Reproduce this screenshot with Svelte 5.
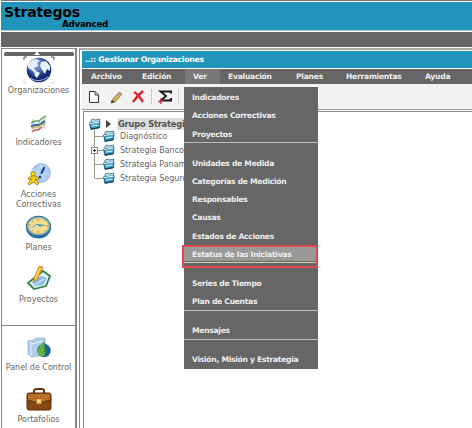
<script>
  const menus = [
    { t: 'Archivo', w: 51 }, { t: 'Edición', w: 51 }, { t: 'Ver', w: 35, on: true },
    { t: 'Evaluación', w: 68 }, { t: 'Planes', w: 50 }, { t: 'Herramientas', w: 79 }, { t: 'Ayuda', w: 40 }
  ];
  const groups = [
    ['Indicadores', 'Acciones Correctivas', 'Proyectos'],
    ['Unidades de Medida', 'Categorías de Medición', 'Responsables', 'Causas', 'Estados de Acciones', 'Estatus de las Iniciativas'],
    ['Series de Tiempo', 'Plan de Cuentas'],
    ['Mensajes'],
    ['Visión, Misión y Estrategia']
  ];
  const tree = ['Diagnóstico', 'Strategia Banco', 'Strategia Panamá', 'Strategia Seguros'];
</script>

{#snippet label(lines)}
  <div class="label">{#each lines as l}<div>{l}</div>{/each}</div>
{/snippet}

{#snippet folder()}
  <svg class="folder" width="12" height="12" viewBox="0 0 12 12">
    <path d="M2 2 5 1 6 2 11 1 10 4 10 10 2 11Z" fill="#b8dced" stroke="#35718d" stroke-width=".8" />
    <path d="M.5 5 9 4 11 3.5 10.5 9.5 2 11.5Z" fill="#3d9dca" stroke="#184d6b" stroke-width=".8" />
    <path d="M1 5.5 10.5 4.2M3 8 9.5 7" stroke="#d8f4fc" stroke-width="1.2" />
    <path d="M2 11 10.5 9.5" stroke="#173848" />
  </svg>
{/snippet}

<div class="app">
  <header>
    <div class="name">Strategos</div>
    <div class="edition">Advanced</div>
  </header>
  <div class="band"></div>
  <div class="body">
    <aside>
      <div class="scroll"><svg width="70" height="5" viewBox="0 0 70 5"><rect y="1" width="70" height="4" rx="1.5" fill="#666" /><path d="M30 4 33 .5 36 4Z" fill="#fff" /></svg></div>
      <div class="item first">
        <svg width="32" height="28" viewBox="0 0 32 28">
          <defs><radialGradient id="globe" cx=".4" cy=".3"><stop offset="0" stop-color="#8ea9df" /><stop offset=".6" stop-color="#4264b3" /><stop offset="1" stop-color="#172c74" /></radialGradient></defs>
          <path d="M1 4V1H4M28 1H31V4" fill="none" stroke="#444" />
          <path d="M1 24V27H4M28 27H31V24" fill="none" stroke="#ddd" />
          <circle cx="16" cy="14" r="12.3" fill="url(#globe)" />
          <path d="M5 8Q9 3 14 3L17 5 14 7 15 10 11 12 13 15 17 17 14 22 12 20 11 16 7 13 5 12ZM18 6 23 5 27 10 27 15 24 13 22 18 19 14 17 10Z" fill="#e7f0fc" />
          <path d="M7 22Q16 28 25 21" fill="none" stroke="#9eb6e8" />
        </svg>
        {@render label(['Organizaciones'])}
      </div>
      <div class="item">
        <svg width="18" height="19" viewBox="0 0 18 19">
          <path d="M2 7 9 4 12 2 16 1V14L3 17Z" fill="#eaf4ef" />
          <path d="M1 8 5 6 9 6 12 3 16 1" fill="none" stroke="#69ad57" stroke-width="1.5" />
          <path d="M1 11 6 10 9 10 15 6" fill="none" stroke="#265fae" stroke-width="2" />
          <path d="M1 13 7 12 12 10 15 8" fill="none" stroke="#e7b448" stroke-width="1.4" />
          <path d="M2 17 5 15 8 15 12 12" fill="none" stroke="#ce5946" stroke-width="1.5" />
          <path d="M3 4V16M9 5V15M14 3V13" stroke="#4b83b5" stroke-width=".5" />
        </svg>
        {@render label(['Indicadores'])}
      </div>
      <div class="item two">
        <svg width="26" height="24" viewBox="0 0 26 24">
          <circle cx="15" cy="11" r="9.3" fill="#a9cbf2" stroke="#8db4e6" />
          <path d="M15 2 10 17M15 2 18 19M6 8 24 13M7 16 22 5" stroke="#bfd9f8" stroke-width="1.5" />
          <path d="M18 6 15.5 11" stroke="#173a99" stroke-width="2" stroke-linecap="round" /><circle cx="14" cy="15" r="1.2" fill="#173a99" />
          <circle cx="7" cy="12" r="2.4" fill="#f8d519" stroke="#8c7410" stroke-width=".6" />
          <path d="M6 14 2 16 3 18 6 17 2 21 3 23 8 20 11 23 13 21 9 17 12 18 13 16 9 14Z" fill="#f4ce10" stroke="#826b0c" stroke-width=".7" />
        </svg>
        {@render label(['Acciones', 'Correctivas'])}
      </div>
      <div class="item">
        <svg width="27" height="24" viewBox="0 0 27 24">
          <ellipse cx="13.5" cy="12.5" rx="12.5" ry="11" fill="#286fa9" />
          <ellipse cx="13.5" cy="11" rx="12" ry="9.8" fill="#83b6d5" stroke="#2c668e" />
          <ellipse cx="13.5" cy="11" rx="10.2" ry="8" fill="#f2dd91" stroke="#c9ad57" stroke-width=".7" />
          <path d="M5 13 12 9 21 10 14 12Z" fill="#4e98ae" /><path d="M5 13 13 10 14 12Z" fill="#fff2ca" />
          <path d="M13 4V6M13 16V18M4 10H6M21 11H23M7 6 8 7M19 6 20 5M7 16 8 15M19 15 20 16" stroke="#a78b3c" />
        </svg>
        {@render label(['Planes'])}
      </div>
      <div class="item">
        <svg width="26" height="26" viewBox="0 0 26 26">
          <path d="M2 18 17 6 24 11 20 21 8 24Z" fill="#e4f3fb" stroke="#318349" stroke-width="1.8" />
          <path d="M6 17 15 11 21 13 17 20 9 21Z" fill="#87b9e5" /><path d="M7 20 17 14M10 20 19 14" stroke="#c6e4fa" />
          <path d="M13 1 17 2 11 15 8 17 8 13Z" fill="#f4b334" stroke="#b77b25" stroke-width=".7" /><path d="M14 3 9 14" stroke="#ffe276" />
        </svg>
        {@render label(['Proyectos'])}
      </div>
      <div class="rule"></div>
      <div class="item panel">
        <svg width="24" height="22" viewBox="0 0 24 22">
          <path d="M1 4 7 3 9 1 18 1V18L4 20 1 17Z" fill="#afcee7" stroke="#86aac8" stroke-width=".7" /><path d="M4 5V19M5 7 17 4" stroke="#e3f2fc" />
          <circle cx="17" cy="13.5" r="6.7" fill="#1761b5" /><path d="M17 4Q7 14 13 19Q17 21 18 18Z" fill="#66b13c" /><path d="M17 4 18 18Q22 14 17 4" fill="#26833c" />
        </svg>
        {@render label(['Panel de Control'])}
      </div>
      <div class="item">
        <svg width="26" height="23" viewBox="0 0 26 23">
          <path d="M8 6V3Q8 1 11 1H16Q18 1 18 3V6" fill="none" stroke="#643511" stroke-width="2" />
          <rect x="1" y="5" width="24" height="17" rx="2" fill="#8a4716" stroke="#56280b" />
          <path d="M2 6H24V12Q13 17 2 12Z" fill="#b77028" /><path d="M2 12Q13 17 24 12" fill="none" stroke="#5e2b0c" />
          <rect x="10.5" y="11" width="5" height="5" rx="1" fill="#e9bb4b" /><rect x="12" y="12" width="2" height="2" fill="#fff1af" />
        </svg>
        {@render label(['Portafolios'])}
      </div>
    </aside>
    <main>
      <div class="title">..:: Gestionar Organizaciones</div>
      <nav>{#each menus as m}<span class:on={m.on} style:width="{m.w}px">{m.t}</span>{/each}</nav>
      <div class="tools">
        <svg width="98" height="18" viewBox="0 0 98 18">
          <path d="M4.5 3.5H10L13.5 7V14.5H4.5Z" fill="#fff" stroke="#333" /><path d="M10 3.5V7H13.5" fill="none" stroke="#444" />
          <path d="M27 12 34 4 37 6 30 14 26 15Z" fill="#deb057" stroke="#765a39" stroke-width=".7" /><path d="M34 4 37 6 35 8 32 6Z" fill="#b997a0" /><path d="M26 15 27 12 30 14Z" fill="#493929" />
          <path d="M49 4Q53 6 58 14M58 3Q53 7 48 14" fill="none" stroke="#e11c2c" stroke-width="2.4" />
          <path d="M66.5 1V17M93.5 1V17" stroke="#aaa" stroke-dasharray="1 1" />
          <path d="M86 5.5V3.5H75.5L81 8 76 12.5H86V10" fill="none" stroke="#181818" stroke-width="1.9" /><path d="M73 14 79 12M76 10V16" stroke="#c92542" stroke-width="1.3" />
        </svg>
      </div>
      <div class="tree">
        <div class="root">{@render folder()}<i class="arrow"></i><b>Grupo Strategia</b></div>
        <div class="nodes">
          {#each tree as n, i}
            <div class="node" class:last={i === 3}><i class="line"></i>{#if i === 1}<i class="plus"></i>{/if}{@render folder()}<span>{n}</span></div>
          {/each}
        </div>
      </div>
      <div class="menu">
        {#each groups as g, i}
          {#if i}<div class="sep"></div>{/if}
          {#each g as t}<div class="opt" class:hot={t.startsWith('Estatus')}>{t}</div>{/each}
        {/each}
        <div class="frame"></div>
      </div>
    </main>
  </div>
</div>

<style>
  :global(body) { background: #fff; }
  * { box-sizing: border-box; }
  .app { width: 472px; height: 428px; overflow: hidden; display: flex; flex-direction: column; padding-left: 1px; background: #fff; font-family: Verdana, "DejaVu Sans", sans-serif; font-size: 8px; }
  header { height: 31px; border-top: 1px solid #777; background: #2094bb; box-shadow: inset 0 1px #fff, inset 0 -1px #b7cbcf; color: #000; font-weight: bold; padding: 3px 0 0 3px; flex: none; }
  .name { font-size: 14px; line-height: 16px; letter-spacing: -.15px; }
  .edition { font-size: 8.8px; line-height: 8px; margin: 0 0 0 58px; letter-spacing: -.3px; }
  .band { height: 15px; margin-top: 1px; background: #666; flex: none; }
  .body { display: flex; flex: 1; min-height: 0; margin-top: 1px; }
  aside { width: 76px; flex: none; border: solid #888; border-width: 1px 2px 0 1px; background: #fff; display: flex; flex-direction: column; }
  .scroll { height: 7px; padding: 2px 0 0 2px; overflow: hidden; flex: none; }
  .scroll svg { display: block; }
  .item { height: 52.3px; flex: none; display: flex; flex-direction: column; justify-content: flex-end; align-items: center; color: #666; gap: 4px; }
  .item svg { display: block; flex: none; }
  .item.first { height: 40px; gap: 2px; }
  .item.two { height: 62px; }
  .item.two + .item { height: 42.5px; }
  .label { font-size: 8px; line-height: 10px; text-align: center; white-space: nowrap; }
  .rule { height: 1px; background: #888; margin-top: 20px; flex: none; }
  .item.panel { height: 47px; }
  main { position: relative; flex: 1; min-width: 0; margin-left: 2px; border-left: 1px solid #888; border-top: 2px solid #aaa; padding: 1px 0 0 2px; display: flex; flex-direction: column; }
  .title { height: 17px; background: #2094bb; color: #fff; font-weight: bold; line-height: 17px; padding-left: 3px; font-size: 7.8px; letter-spacing: -.31px; flex: none; }
  nav { height: 15px; margin-top: 1px; background: #666; display: flex; padding-left: 1px; color: #eee; font-weight: bold; line-height: 16px; font-size: 7.6px; letter-spacing: -.24px; flex: none; }
  nav span { padding-left: 8px; white-space: nowrap; }
  nav .on { background: #777; }
  .tools { height: 26px; background: #f2f2f2; border-bottom: 1px solid #999; padding: 4px 0 0 3px; flex: none; }
  .tools svg { display: block; }
  .tree { flex: 1; margin-top: 1px; border: solid #888; border-width: 1px 0 0 1px; margin-left: 1px; padding: 4px 0 0 5px; color: #666; }
  .folder { display: block; flex: none; }
  .root { display: flex; align-items: center; height: 15px; }
  .root b { background: #ddd; padding: 0 1px; margin-left: 6px; line-height: 12px; font-size: 8.3px; letter-spacing: -.2px; color: #555; white-space: nowrap; }
  .arrow { border: solid transparent; border-width: 4px 0 4px 5px; border-left-color: #444; margin-left: 5px; }
  .nodes { padding-left: 5px; margin-top: -2px; }
  .node { position: relative; display: flex; align-items: center; height: 14.1px; border-left: 1px solid #998; }
  .node.last { border-left-color: transparent; }
  .node.last::before { content: ''; position: absolute; left: -1px; top: 0; width: 1px; height: 7px; background: #998; }
  .line { width: 8px; height: 1px; background: #998; flex: none; }
  .plus { position: absolute; left: -4px; top: 4px; width: 7px; height: 7px; border: 1px solid #888; background: linear-gradient(#333, #333) center / 3px 1px no-repeat, linear-gradient(#333, #333) center / 1px 3px no-repeat, #fff; }
  .node span { margin-left: 5px; white-space: nowrap; font-size: 8px; }
  .menu { position: absolute; left: 104px; top: 37px; width: 134px; height: 282px; background: #666; color: #eee; font-weight: bold; font-size: 7.6px; letter-spacing: -.28px; }
  .opt { height: 18.3px; line-height: 21px; padding-left: 8px; white-space: nowrap; }
  .opt.hot { background: linear-gradient(#999, #999) 0 2px / 132px 15px no-repeat; }
  .sep { height: 10.7px; border-top: 1px solid #bbb; }
  .hot + .sep { border-top-color: #d8d2b4; }
  .frame { position: absolute; left: -2px; top: 158px; width: 136px; height: 23px; border: 2px solid #df4650; }
</style>
